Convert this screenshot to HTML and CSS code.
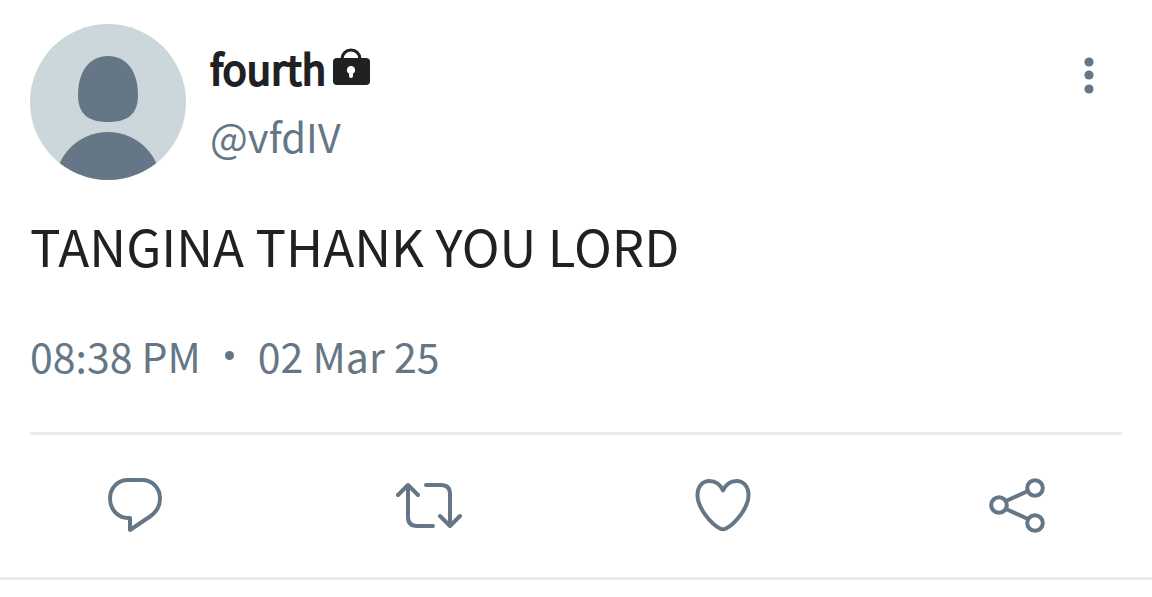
FILE: index.html
```html
<!DOCTYPE html>
<html lang="en">
<head>
    <meta charset="UTF-8">
    <meta name="viewport" content="width=device-width, initial-scale=1">
    <title>fourth</title>
    <link rel="stylesheet" href="styles.css">
</head>
<body>
<article class="post">
    <header class="post_header">
        <svg class="avatar" viewBox="0 0 156 156" aria-hidden="true">
            <clipPath id="round"><circle cx="78" cy="78" r="78"/></clipPath>
            <circle cx="78" cy="78" r="78" fill="#ccd7db"/>
            <path d="M78 32C97 32 108 48 108 71C108 90 98 98 78 98C58 98 48 90 48 71C48 48 59 32 78 32Z" fill="#657786"/>
            <circle cx="78" cy="161" r="53" fill="#657786" clip-path="url(#round)"/>
        </svg>
        <div class="author">
            <div class="name">
                <span>fourth</span>
                <svg class="lock" viewBox="0 0 37 40" aria-hidden="true">
                    <path d="M9 12V11a9 9 0 0 1 18 0v1" fill="none" stroke="#202122" stroke-width="3"/>
                    <rect y="10" width="37" height="27" rx="4" fill="#202122"/>
                    <path d="M18 18a4 4 0 0 1 2 7.500V28a2 2 0 0 1-4 0V25.500a4 4 0 0 1 2-7.500Z" fill="#fff"/>
                </svg>
            </div>
            <a class="handle" href="#">@vfdIV</a>
        </div>
        <button class="menu" type="button" aria-label="More">
            <svg class="icon_dots" viewBox="0 0 66 66">
                <circle cx="33" cy="20" r="4.600"/>
                <circle cx="33" cy="33" r="4.600"/>
                <circle cx="33" cy="47" r="4.600"/>
            </svg>
        </button>
    </header>
    <p class="text">TANGINA THANK YOU LORD</p>
    <div class="meta">
        <span>08:38 PM</span>
        <span class="dot"></span>
        <span>02 Mar 25</span>
    </div>
    <div class="actions">
        <button type="button" aria-label="Reply">
            <svg class="icon" viewBox="0 0 72 72"><path d="M31 60V48H29C19 48 11 39.500 11 28.500C11 18 18.500 10 29 10H43C53.500 10 61 18 61 28.500C61 36 57.500 42 51 46.500Z"/></svg>
        </button>
        <button type="button" aria-label="Repost">
            <svg class="icon" viewBox="0 0 72 72"><path d="M5 25L15 15L25 25M15 15V47Q15 56 24 56H40M33 15H48Q57 15 57 24V56M47 46L57 56L67 46"/></svg>
        </button>
        <button type="button" aria-label="Like">
            <svg class="icon" viewBox="0 0 72 72"><path d="M36 20.500C33 14 28 11 22.500 11C15 11 10.500 17 10.500 25C10.500 38 24 54 33 58.500Q36 60 39 58.500C48 54 61.500 38 61.500 25C61.500 17 57 11 49.500 11C44 11 39 14 36 20.500Z"/></svg>
        </button>
        <button type="button" aria-label="Share">
            <svg class="icon" viewBox="0 0 72 72">
                <circle cx="18" cy="35" r="7.800"/>
                <circle cx="54" cy="18" r="7.800"/>
                <circle cx="54" cy="53" r="7.800"/>
                <path d="M25 31L47 21M25 39L47 49"/>
            </svg>
        </button>
    </div>
</article>
</body>
</html>
```
FILE: styles.css
```css
body {
    margin: 0;
    background: #fff;
    font-family: "Noto Sans CJK SC", "Noto Sans", sans-serif;
    font-size: 40px;
    color: #202122;
}
button {
    padding: 0;
    border: 0;
    background: none;
    cursor: pointer;
}
svg {
    display: block;
}
.post {
    padding: 24px 30px 0;
    border-bottom: 3px solid #ebebeb;
}
.post_header {
    display: flex;
    align-items: center;
    gap: 24px;
}
.avatar {
    width: 156px;
    height: 156px;
}
.author {
    flex: 1;
    line-height: 68px;
}
.name {
    display: flex;
    align-items: center;
    gap: 7px;
    -webkit-text-stroke: 2px #202122;
}
.lock {
    width: 37px;
    height: 40px;
}
.handle {
    display: block;
    color: #657786;
    text-decoration: none;
}
.menu {
    align-self: flex-start;
    margin-top: 18px;
}
.icon_dots {
    width: 66px;
    height: 66px;
    fill: #657786;
}
.text {
    margin: 27px 0 42px;
    font-size: 51px;
    line-height: 76px;
}
.meta {
    display: flex;
    align-items: center;
    gap: 24px;
    padding-bottom: 47px;
    font-size: 41px;
    line-height: 60px;
    color: #657786;
}
.dot {
    width: 9px;
    height: 9px;
    border-radius: 50%;
    background: #657786;
}
.actions {
    display: flex;
    justify-content: space-between;
    padding: 35px 69px;
    border-top: 3px solid #ebebeb;
}
.icon {
    width: 72px;
    height: 72px;
    fill: none;
    stroke: #657786;
    stroke-width: 4;
    stroke-linecap: round;
    stroke-linejoin: round;
}
```
